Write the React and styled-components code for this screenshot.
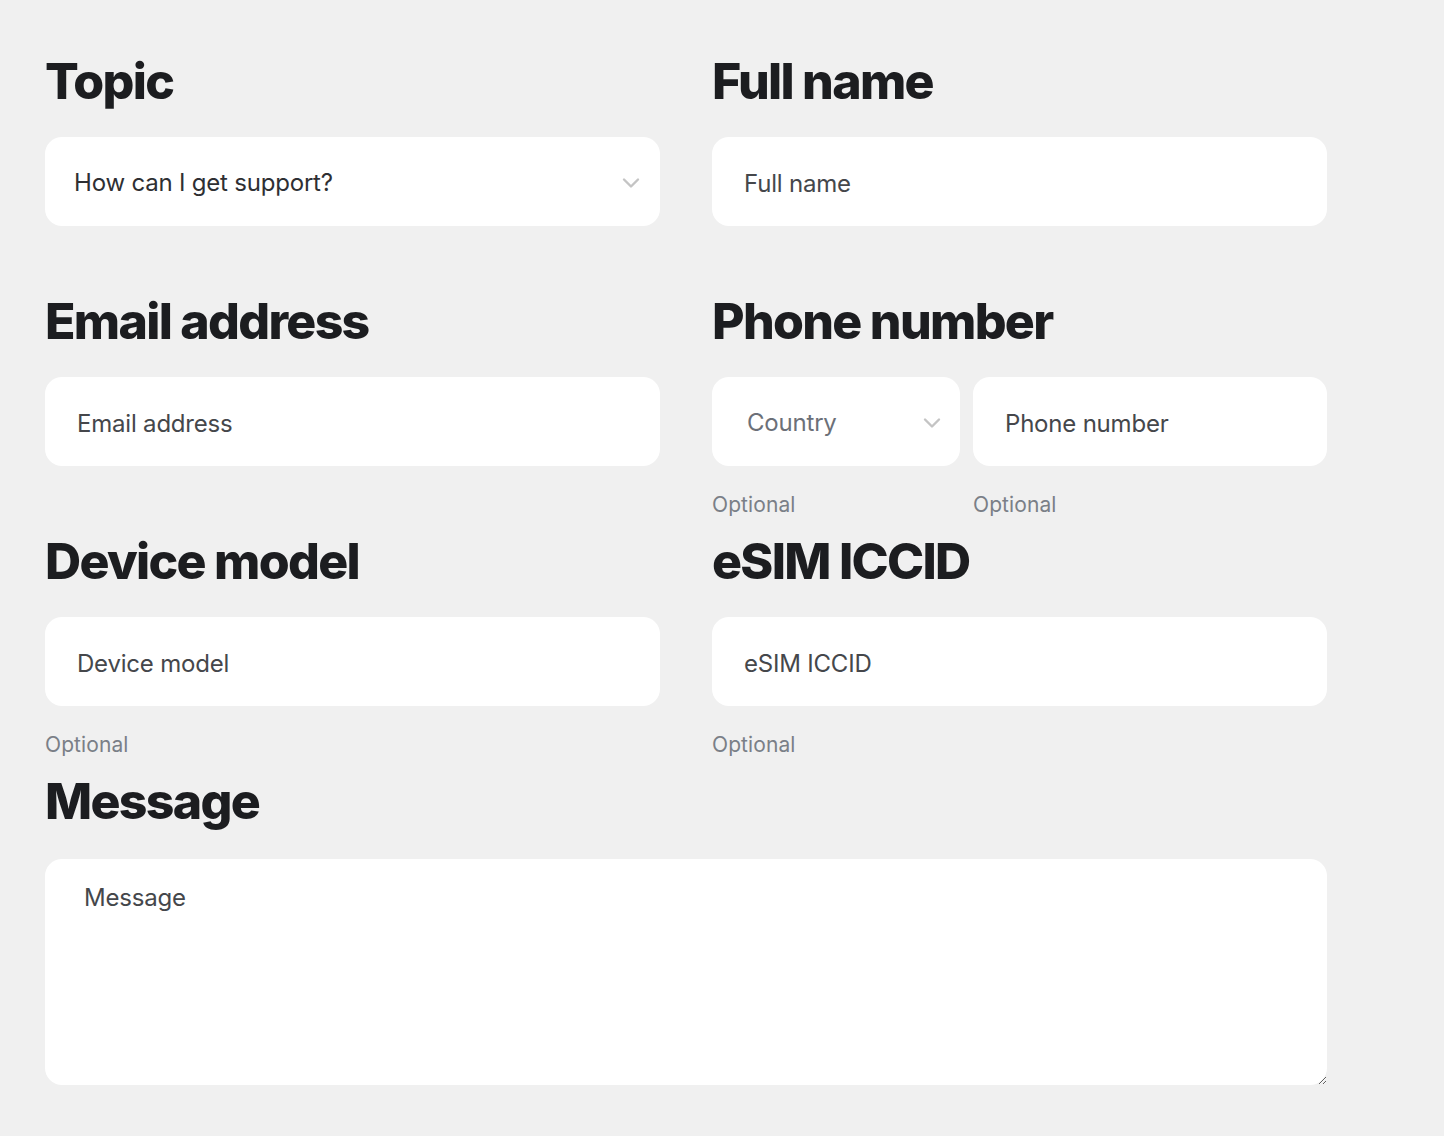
import React from 'react'
import styled, { createGlobalStyle } from 'styled-components'

const Global = createGlobalStyle`
  html, body {
    margin: 0;
    background: #f0f0f0;
  }
  body {
    font-family: Inter, "Noto Sans", sans-serif;
    color: #1d1e20;
  }
`

const Chevron = () => (
  <svg width="20" height="12" viewBox="0 0 20 12" fill="none">
    <path d="M3 2.5l7 7 7-7" stroke="#c4c4c4" strokeWidth="2.4" strokeLinecap="round" strokeLinejoin="round" />
  </svg>
)

function App() {
  return (
    <Page>
      <Global />
      <Form>
        <Field>
          <Label>Topic</Label>
          <SelectBox>
            <SelectText>How can I get support?</SelectText>
            <Chevron />
          </SelectBox>
          <Hint />
        </Field>
        <Field>
          <Label>Full name</Label>
          <Input placeholder="Full name" />
          <Hint />
        </Field>

        <Field>
          <Label>Email address</Label>
          <Input placeholder="Email address" />
          <Hint />
        </Field>
        <Field>
          <Label>Phone number</Label>
          <PhoneRow>
            <div>
              <SelectBox $pad="35px" $right="18px">
                <SelectText $muted>Country</SelectText>
                <Chevron />
              </SelectBox>
              <Hint>Optional</Hint>
            </div>
            <div>
              <Input placeholder="Phone number" />
              <Hint>Optional</Hint>
            </div>
          </PhoneRow>
        </Field>

        <Field>
          <Label>Device model</Label>
          <Input placeholder="Device model" />
          <Hint>Optional</Hint>
        </Field>
        <Field>
          <Label>eSIM ICCID</Label>
          <Input placeholder="eSIM ICCID" />
          <Hint>Optional</Hint>
        </Field>

        <Field $wide>
          <Label>Message</Label>
          <TextArea placeholder="Message" />
        </Field>
      </Form>
    </Page>
  )
}

export default App

const Page = styled.div`
  padding: 49px 45px 60px;
  min-height: 1136px;
  box-sizing: border-box;
`

const Form = styled.div`
  display: grid;
  grid-template-columns: 615px 615px;
  column-gap: 52px;
`

const Field = styled.div`
  display: flex;
  flex-direction: column;
  grid-column: ${p => (p.$wide ? '1 / -1' : 'auto')};
`

const Label = styled.div`
  font-family: Inter, sans-serif;
  font-weight: 800;
  font-size: 50px;
  line-height: 60px;
  letter-spacing: -1.7px;
  color: #1c1d20;
  padding-top: 2px;
  margin-bottom: 26px;
`

const boxBase = `
  box-sizing: border-box;
  width: 100%;
  height: 89px;
  background: #fff;
  border: none;
  border-radius: 17px;
  font-family: Inter, sans-serif;
  font-size: 24px;
  letter-spacing: -0.2px;
  color: #3a3b3e;
  outline: none;
`

const Input = styled.input`
  ${boxBase}
  padding: 3px 32px 0;
  &::placeholder {
    color: #45474b;
  }
`

const SelectBox = styled.div`
  ${boxBase}
  display: flex;
  align-items: center;
  justify-content: space-between;
  padding: 2px ${p => p.$right || '19px'} 0 ${p => p.$pad || '29px'};
  cursor: pointer;
`

const SelectText = styled.span`
  color: ${p => (p.$muted ? '#6c7078' : '#2e2f33')};
`

const Hint = styled.div`
  margin-top: 27px;
  height: 24px;
  margin-bottom: 12px;
  font-size: 21px;
  line-height: 24px;
  letter-spacing: 0.1px;
  color: #7a7f87;
`

const PhoneRow = styled.div`
  display: grid;
  grid-template-columns: 248px 1fr;
  column-gap: 13px;
  margin-bottom: -63px;
`

const TextArea = styled.textarea`
  ${boxBase}
  height: 226px;
  margin-top: 2px;
  padding: 24px 39px;
  resize: vertical;
  &::placeholder {
    color: #45474b;
  }
`
